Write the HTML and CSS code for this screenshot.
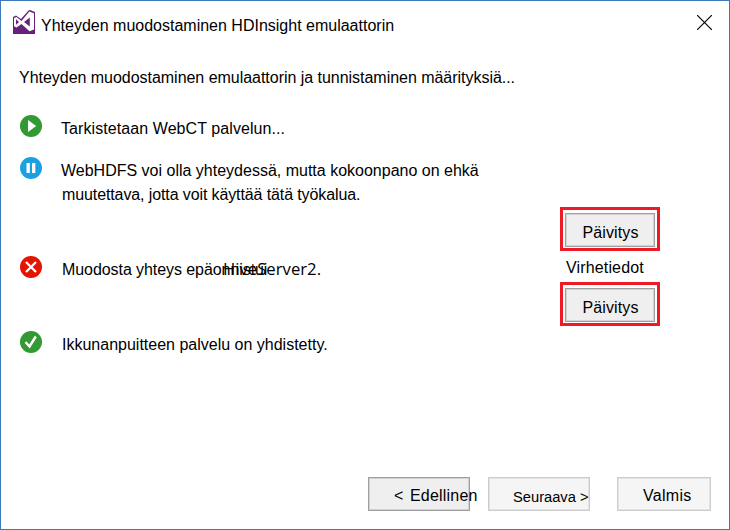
FILE: index.html
```html
<!DOCTYPE html>
<html lang="fi">
<head>
<meta charset="utf-8">
<title>Yhteyden muodostaminen HDInsight emulaattorin</title>
<link rel="stylesheet" href="styles.css">
</head>
<body>
<main class="dialog">
  <header class="titlebar">
    <svg class="logo" width="22" height="24" viewBox="0 0 22 24">
      <path fill="#68217a" d="M0 7 3 5.5 8 9 15.5 .5 17 0 22 2V24H0Z"/>
      <path fill="#fff" d="M1 8 3.500 7 8.500 11 16.300 1.500 21 3.300V19.500L16.500 21.300 8.500 14 3.500 17.500 1 16.200Z"/>
      <path fill="#68217a" d="M3 9.200v5.600L6 12ZM16.800 7.500v9L11 12Z"/>
    </svg>
    <h1 class="title">Yhteyden muodostaminen HDInsight emulaattorin</h1>
    <svg class="close" width="15" height="15" viewBox="0 0 15 15"><path d="M0 0l15 15m0-15l-15 15" stroke="#000" stroke-width="1.150"/></svg>
  </header>
  <p class="intro">Yhteyden muodostaminen emulaattorin ja tunnistaminen määrityksiä...</p>
  <section class="checks">
    <div class="check check-web">
      <svg class="status" width="22" height="22" viewBox="0 0 22 22"><circle cx="11" cy="11" r="11" fill="#339933"/><path fill="#fff" d="M8 5v12l8.200-6Z"/></svg>
      <p class="text-web">Tarkistetaan WebCT palvelun...</p>
    </div>
    <div class="check check-hdfs">
      <svg class="status" width="22" height="22" viewBox="0 0 22 22"><circle cx="11" cy="11" r="11" fill="#1ba1e2"/><path fill="#fff" d="M6.500 6h3.300v10H6.500Zm5.500 0h3.300v10H12Z"/></svg>
      <p><span class="text-hdfs">WebHDFS voi olla yhteydessä, mutta kokoonpano on ehkä</span><br><span class="text-hdfs2">muutettava, jotta voit käyttää tätä työkalua.</span></p>
      <div class="highlight"><button class="update">Päivitys</button></div>
    </div>
    <div class="check check-hive">
      <svg class="status" width="22" height="22" viewBox="0 0 22 22"><circle cx="11" cy="11" r="11" fill="#e51400"/><path stroke="#fff" stroke-width="2.300" d="M6 6l10 10M16 6L6 16"/></svg>
      <p class="text-hive">Muodosta yhteys epäonnistui<span class="server">HiveServer2.</span></p>
      <div class="actions"><a class="details">Virhetiedot</a><div class="highlight"><button class="update">Päivitys</button></div></div>
    </div>
    <div class="check check-gateway">
      <svg class="status" width="22" height="22" viewBox="0 0 22 22"><circle cx="11" cy="11" r="11" fill="#339933"/><path fill="none" stroke="#fff" stroke-width="2.500" d="M5.500 11l4 4.500L15.800 5.500"/></svg>
      <p class="text-gateway">Ikkunanpuitteen palvelu on yhdistetty.</p>
    </div>
  </section>
  <footer class="footer">
    <button class="nav previous"><span class="lt">&lt;</span><span class="edellinen">Edellinen</span></button>
    <button class="nav next"><span class="seuraava">Seuraava &gt;</span></button>
    <button class="nav finish"><span class="valmis">Valmis</span></button>
  </footer>
</main>
</body>
</html>
```

FILE: styles.css
```css
* { box-sizing: border-box; }
body { margin: 0; background: #fff; color: #000; font: 16px/24px "Liberation Sans", Arial, sans-serif; }
h1, p { margin: 0; font: inherit; white-space: nowrap; }
svg { display: block; flex: none; }
button { margin: 0; padding: 0; border-radius: 0; color: #000; font: inherit; white-space: nowrap; }
.dialog { display: flex; flex-direction: column; width: 730px; height: 530px; border: 1px solid #3c7ab8; }
.titlebar { display: flex; height: 65px; padding: 9px 17px 0 12px; }
.title { margin: 4px 0 0 6px; }
.close { margin: 5px 0 0 auto; }
.intro { height: 49px; padding-left: 18px; letter-spacing: -.03px; }
.checks { display: grid; grid-template-rows: 42px 99px 75px 40px; padding-left: 19px; }
.check { display: grid; grid-template-columns: 22px 480px 100px; column-gap: 19px; align-items: start; }
.check-hive, .check-gateway { column-gap: 20px; grid-template-columns: 22px 478px 100px; }
.check p { padding-top: 2px; }
.text-web { letter-spacing: .08px; }
.text-hdfs2 { margin-left: 1px; letter-spacing: -.11px; }
.highlight { width: 100px; height: 44px; padding: 2px; border: 3px solid #ed1c24; }
.check-hdfs .highlight { margin-top: 50px; }
.update { display: block; width: 90px; height: 34px; margin: 1px 0 0; padding: 5px 0 0 1px; border: 1px solid #9f9f9f; box-shadow: inset 0 0 0 1px #d4d4d4; background: #efefef; letter-spacing: .12px; }
.actions { display: grid; grid-template-rows: 26px 44px; }
.details { padding-left: 6px; letter-spacing: .15px; }
.text-hive { position: relative; letter-spacing: -.07px; }
.server { position: absolute; left: 161px; top: 1px; font-family: "Open Sans", sans-serif; font-size: 16.7px; letter-spacing: 0; }
.footer { display: flex; margin-top: auto; padding: 0 18px 18px 367px; }
.nav { display: flex; height: 34px; padding-top: 6px; border: 1px solid #ccc; box-shadow: inset 0 0 0 1px #e3e3e3; background: #f5f5f5; }
.previous { width: 102px; padding-left: 25px; border-color: #a0a0a0; box-shadow: inset 0 0 0 1px #d0d0d0; background: #efefef; }
.lt { flex: none; width: 16px; text-align: left; }
.edellinen { letter-spacing: .2px; }
.next { width: 102px; margin-left: 18px; padding: 7px 0 0 24px; font-size: 14.7px; }
.finish { width: 94px; margin-left: 27px; padding-left: 25px; letter-spacing: .3px; }
```
